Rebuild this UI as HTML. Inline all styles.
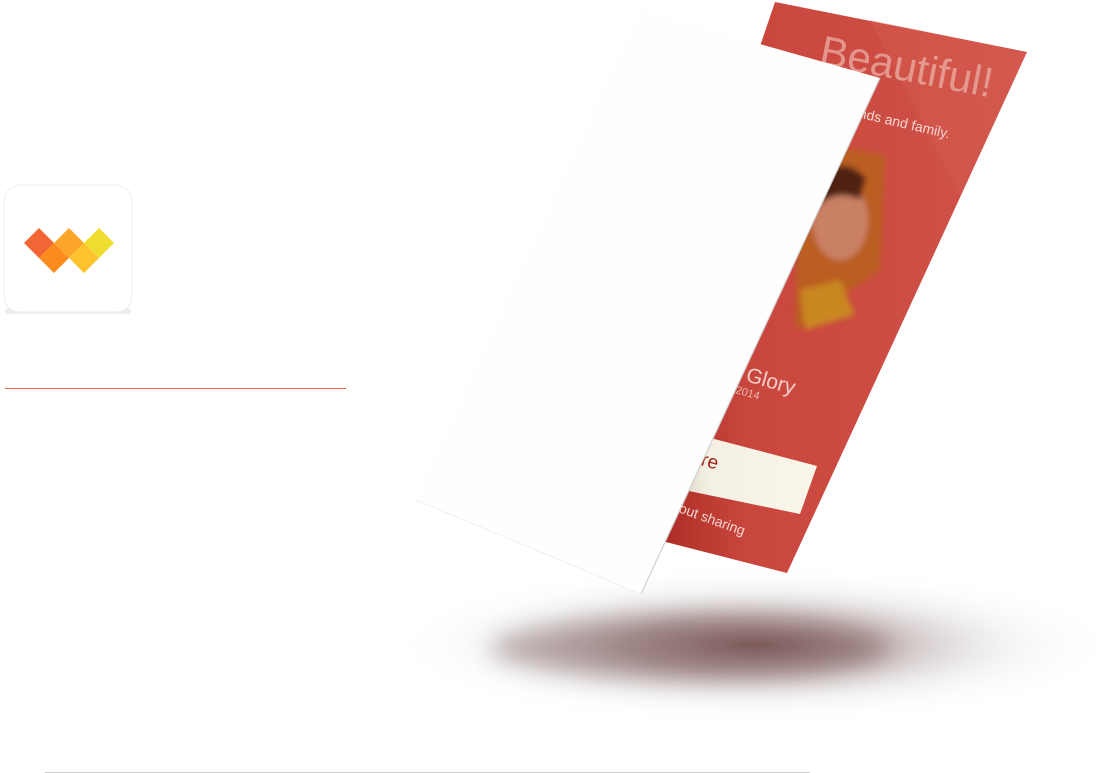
<!DOCTYPE html>
<html><head><style>
html,body{margin:0;padding:0;background:#fff;width:1118px;height:773px;overflow:hidden}
</style></head><body>
<svg width="1118" height="773" viewBox="0 0 1118 773" xmlns="http://www.w3.org/2000/svg" style="position:absolute;left:0;top:0">
<defs>
<radialGradient id="sh" cx="0.5" cy="0.5" r="0.5">
<stop offset="0" stop-color="#6a3f3f" stop-opacity="0.75"/>
<stop offset="0.35" stop-color="#8a6a6a" stop-opacity="0.5"/>
<stop offset="0.7" stop-color="#ccc" stop-opacity="0.2"/>
<stop offset="1" stop-color="#fff" stop-opacity="0"/>
</radialGradient>
<linearGradient id="rd" x1="0" y1="0" x2="1" y2="0">
<stop offset="0" stop-color="#8a0f0a"/>
<stop offset="0.4" stop-color="#c9463d"/>
<stop offset="1" stop-color="#d0544a"/>
</linearGradient>
<linearGradient id="bt" x1="0" y1="0" x2="1" y2="0">
<stop offset="0" stop-color="#c9c2b0"/>
<stop offset="0.3" stop-color="#f3efe2"/>
<stop offset="1" stop-color="#faf7ea"/>
</linearGradient>
<filter id="bl" x="-50%" y="-50%" width="200%" height="200%"><feGaussianBlur stdDeviation="12"/></filter>
<filter id="bl2"><feGaussianBlur stdDeviation="3"/></filter>
</defs>
<!-- icon -->
<rect x="5" y="308" width="126" height="6" rx="3" fill="#e2dada" opacity="0.5"/>
<rect x="4" y="185" width="128" height="127" rx="16" fill="#fff" stroke="#efefef"/>
<polygon points="24,243 39,228 54,243 39,258" fill="#f26535"/>
<polygon points="39,258 54,243 69,258 54,273" fill="#fb8b1d"/>
<polygon points="54,243 69,228 84,243 69,258" fill="#fba52b"/>
<polygon points="69,258 84,243 99,258 84,273" fill="#fdc22c"/>
<polygon points="84,243 99,228 114,243 99,258" fill="#eedc2f"/>
<line x1="5" y1="388.5" x2="346" y2="388.5" stroke="#e26a4a" stroke-width="1"/>
<line x1="45" y1="772.5" x2="810" y2="772.5" stroke="#ccc" stroke-width="1"/>
<!-- shadow -->
<ellipse cx="755" cy="645" rx="365" ry="80" fill="url(#sh)"/>
<ellipse cx="690" cy="648" rx="200" ry="30" fill="#5a3030" opacity="0.35" filter="url(#bl)"/>
<!-- red card -->
<polygon points="775,2 1027,52 787,573 560,515 640,400" fill="url(#rd)"/>
<polygon points="870,20 1027,52 960,195" fill="#d96256" opacity="0.3"/>
<g filter="url(#bl2)" opacity="0.85">
<polygon points="800,140 885,155 880,270 795,330" fill="#b8621e"/>
<ellipse cx="840" cy="220" rx="28" ry="40" fill="#c98a6a"/>
<path d="M812 185 Q840 150 866 178 L860 200 Q836 188 816 208Z" fill="#3a1a10"/>
<polygon points="800,290 840,280 855,315 805,330" fill="#c9921e"/>
</g>
<text transform="translate(818,64) rotate(11)" font-family="Liberation Sans,sans-serif" font-size="42" fill="#e9a49b" opacity="0.85">Beautiful!</text>
<text transform="translate(843,114) rotate(13)" font-family="Liberation Sans,sans-serif" font-size="14" fill="#f6d6d0">riends and family.</text>
<text transform="translate(728,376) rotate(16)" font-family="Liberation Sans,sans-serif" font-size="21" fill="#f3cfc8">g Glory</text>
<text transform="translate(735,393) rotate(16)" font-family="Liberation Sans,sans-serif" font-size="11" fill="#eab8b0">2014</text>
<polygon points="680,430 817,466 800,514 660,485" fill="url(#bt)"/>
<text transform="translate(690,462) rotate(16)" font-family="Liberation Sans,sans-serif" font-size="19" fill="#a0201a">ure</text>
<text transform="translate(678,512) rotate(20)" font-family="Liberation Sans,sans-serif" font-size="14" fill="#f6d6d0">out sharing</text>
<!-- white card -->
<polygon points="640,10 880,78 641,594 416,500" fill="#fefefe"/>
<line x1="880" y1="78" x2="641" y2="594" stroke="#cfcfcf" stroke-width="1.2"/>
<line x1="416" y1="500" x2="641" y2="594" stroke="#f0f0f0" stroke-width="1"/>
</svg>
</body></html>
